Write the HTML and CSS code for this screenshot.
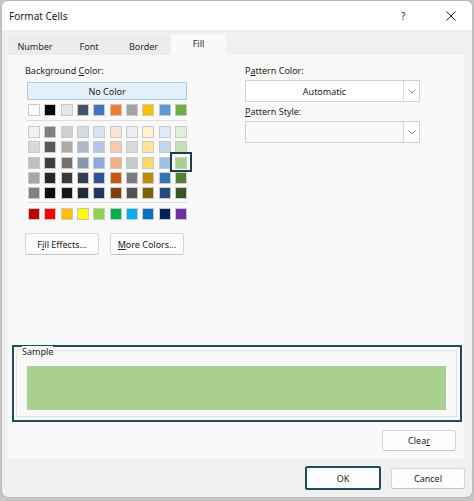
FILE: index.html
```html
<!DOCTYPE html>
<html>
<head>
<meta charset="utf-8">
<link rel="stylesheet" href="styles.css">
</head>
<body>
<div class="dialog">
  <div class="titlebar">
    <span class="title">Format Cells</span>
    <span class="help">?</span>
    <svg class="close" width="10" height="10" viewBox="0 0 10 10"><path d="M0.5 0.5 L9.5 9.5 M9.5 0.5 L0.5 9.5" stroke="#1a1a1a" stroke-width="1" fill="none"/></svg>
  </div>
  <div class="tabs">
    <div class="tab t-number">Number</div>
    <div class="tab t-font">Font</div>
    <div class="tab t-border">Border</div>
    <div class="tab t-fill active">Fill</div>
  </div>
  <div class="panel">
    <div class="top">
      <div class="left">
        <div class="label">Background <u>C</u>olor:</div>
        <div class="nocolor">No Color</div>
        <div class="swatches row0">
          <span style="background:#FFFFFF"></span><span style="background:#000000"></span><span style="background:#E7E6E6"></span><span style="background:#44546A"></span><span style="background:#4472C4"></span><span style="background:#ED7D31"></span><span style="background:#A5A5A5"></span><span style="background:#FFC000"></span><span style="background:#5B9BD5"></span><span style="background:#70AD47"></span>
        </div>
        <div class="sep"></div>
        <div class="swatches theme">
          <span style="background:#F2F2F2"></span><span style="background:#7F7F7F"></span><span style="background:#D0CECE"></span><span style="background:#D6DCE4"></span><span style="background:#D9E1F2"></span><span style="background:#FCE4D6"></span><span style="background:#EDEDED"></span><span style="background:#FFF2CC"></span><span style="background:#DDEBF7"></span><span style="background:#E2EFDA"></span>
          <span style="background:#D9D9D9"></span><span style="background:#595959"></span><span style="background:#AEAAAA"></span><span style="background:#ACB9CA"></span><span style="background:#B4C6E7"></span><span style="background:#F8CBAD"></span><span style="background:#DBDBDB"></span><span style="background:#FFE699"></span><span style="background:#BDD7EE"></span><span style="background:#C6E0B4"></span>
          <span style="background:#BFBFBF"></span><span style="background:#404040"></span><span style="background:#757171"></span><span style="background:#8497B0"></span><span style="background:#8EA9DB"></span><span style="background:#F4B084"></span><span style="background:#C9C9C9"></span><span style="background:#FFD966"></span><span style="background:#9BC2E6"></span><span class="selected" style="background:#A9D08E"></span>
          <span style="background:#A6A6A6"></span><span style="background:#262626"></span><span style="background:#3A3838"></span><span style="background:#333F4F"></span><span style="background:#305496"></span><span style="background:#C65911"></span><span style="background:#7B7B7B"></span><span style="background:#BF8F00"></span><span style="background:#2F75B5"></span><span style="background:#548235"></span>
          <span style="background:#808080"></span><span style="background:#0D0D0D"></span><span style="background:#161616"></span><span style="background:#222B35"></span><span style="background:#203764"></span><span style="background:#833C0C"></span><span style="background:#525252"></span><span style="background:#806000"></span><span style="background:#1F4E78"></span><span style="background:#375623"></span>
        </div>
        <div class="sep sep2"></div>
        <div class="swatches row0">
          <span style="background:#C00000"></span><span style="background:#FF0000"></span><span style="background:#FFC000"></span><span style="background:#FFFF00"></span><span style="background:#92D050"></span><span style="background:#00B050"></span><span style="background:#00B0F0"></span><span style="background:#0070C0"></span><span style="background:#002060"></span><span style="background:#7030A0"></span>
        </div>
        <div class="btnrow">
          <div class="btn">F<u>i</u>ll Effects...</div>
          <div class="btn"><span><u>M</u>ore Colors...</span></div>
        </div>
      </div>
      <div class="right">
        <div class="label">P<u>a</u>ttern Color:</div>
        <div class="select">
          <div class="sel-text">Automatic</div>
          <div class="sel-arrow"><svg width="8" height="5" viewBox="0 0 8 5"><path d="M0.5 0.5 L4 4 L7.5 0.5" stroke="#777" stroke-width="0.9" fill="none"/></svg></div>
        </div>
        <div class="label label2"><u>P</u>attern Style:</div>
        <div class="select disabled">
          <div class="sel-text"></div>
          <div class="sel-arrow"><svg width="8" height="5" viewBox="0 0 8 5"><path d="M0.5 0.5 L4 4 L7.5 0.5" stroke="#777" stroke-width="0.9" fill="none"/></svg></div>
        </div>
      </div>
    </div>
    <div class="sample-focus">
      <div class="sample-group">
        <div class="sample-label">Sample</div>
        <div class="sample-fill"></div>
      </div>
    </div>
    <div class="clear-row">
      <div class="btn clear">Clea<u>r</u></div>
    </div>
  </div>
  <div class="footer">
    <div class="btn ok">OK</div>
    <div class="btn cancel">Cancel</div>
  </div>
</div>
</body>
</html>
```

FILE: styles.css
```css
* { box-sizing: border-box; }
html, body { margin: 0; padding: 0; }
body {
  width: 474px;
  height: 501px;
  background: #c6c6c6;
  font-family: "Noto Sans", "Open Sans", sans-serif;
  font-size: 9px;
  color: #1b1b1b;
  overflow: hidden;
  padding: 1px 2px 0 2px;
}
u { text-decoration: underline; text-underline-offset: 1px; }
.dialog {
  width: 470px;
  height: 496px;
  background: #f0f0f0;
  border-radius: 6px;
  overflow: hidden;
  display: flex;
  flex-direction: column;
  box-shadow: 0 0 0 1px #b8b8b8;
}
.titlebar {
  height: 29px;
  flex: none;
  background: #ffffff;
  display: flex;
  align-items: center;
  padding-left: 7px;
}
.title { font-size: 10px; flex: 1; }
.help { font-size: 10px; width: 10px; margin-right: 35px; color: #333; }
.close { margin-right: 16px; }
.tabs {
  flex: none;
  height: 25px;
  padding: 4px 0 0 6px;
  display: flex;
  align-items: flex-end;
}
.tab {
  height: 18px;
  display: flex;
  align-items: center;
  justify-content: center;
  background: #ececec;
  color: #2a2a2a;
}
.t-number { width: 54px; }
.t-font { width: 54px; }
.t-border { width: 55px; }
.t-fill { width: 55px; }
.tab.active { height: 21px; background: #f9f9f9; padding-bottom: 3px; }
.panel {
  flex: none;
  height: 404px;
  margin: 0 8px 0 6px;
  background: #f9f9f9;
  display: flex;
  flex-direction: column;
  padding-bottom: 8px;
}
.top {
  display: grid;
  grid-template-columns: 220px 175px;
  padding-left: 17px;
  padding-top: 9px;
}
.label { height: 14px; line-height: 14px; color: #222; }
.label2 { margin-top: 3px; }
.nocolor {
  margin: 4px 0 0 2px;
  width: 160px;
  height: 18px;
  background: #e3f0fb;
  border: 1px solid #a9cbe8;
  display: flex;
  align-items: center;
  justify-content: center;
  color: #222;
}
.swatches {
  display: grid;
  grid-template-columns: repeat(10, 12px);
  column-gap: 4.33px;
  margin-left: 3px;
}
.swatches span {
  display: block;
  width: 12px;
  height: 12px;
  border: 1px solid #c9c9c9;
  position: relative;
}
.row0 { margin-top: 4px; }
.theme { row-gap: 3.3px; }
.sep {
  width: 160px;
  height: 1px;
  background: #dedede;
  margin: 4px 0 5px 2px;
}
.sep2 { margin: 3px 0 5px 2px; }
.sep2 + .row0 { margin-top: 0; }
.selected::after {
  content: "";
  position: absolute;
  left: -6px;
  top: -6px;
  right: -6px;
  bottom: -4px;
  border: 2px solid #1d3f49;
}
.btnrow {
  display: flex;
  gap: 11px;
  margin-top: 13px;
}
.btn {
  height: 22px;
  background: #fdfdfd;
  border: 1px solid #d6d6d6;
  border-bottom-color: #c4c4c4;
  border-radius: 3px;
  display: flex;
  align-items: center;
  justify-content: center;
  color: #222;
}
.btnrow .btn { width: 74px; }
.select {
  margin-top: 2px;
  height: 22px;
  width: 175px;
  background: #ffffff;
  border: 1px solid #d2d2d2;
  display: flex;
}
.select.disabled { background: #f9f9f9; }
.sel-text {
  flex: 1;
  display: flex;
  align-items: center;
  justify-content: center;
  color: #222;
}
.sel-arrow {
  width: 16px;
  border-left: 1px solid #d9d9d9;
  display: flex;
  align-items: center;
  justify-content: center;
  background: #fff;
}
.sample-focus {
  margin: auto 2px 0 4px;
  height: 77px;
  border: 2px solid #1f4d57;
  padding: 3px 3px 3px 2px;
}
.sample-group {
  height: 100%;
  border: 1px solid #e2e2e2;
  padding: 0 10px 0 10px;
}
.sample-label {
  height: 12px;
  line-height: 12px;
  margin-top: -5px;
  margin-left: -5px;
  width: max-content;
  background: #f9f9f9;
  color: #222;
}
.sample-fill {
  margin-top: 8px;
  height: 44px;
  background: #a9d08e;
}
.clear-row {
  display: flex;
  justify-content: flex-end;
  margin-top: 8px;
  padding-right: 8px;
}
.btn.clear { width: 74px; height: 21px; }
.footer {
  flex: 1;
  display: flex;
  justify-content: flex-end;
  align-items: center;
  gap: 10px;
  padding-right: 7px;
}
.btn.ok {
  width: 76px;
  height: 24px;
  border: 2px solid #1f4d57;
  border-radius: 2px;
}
.btn.cancel { width: 74px; height: 21px; }
```
